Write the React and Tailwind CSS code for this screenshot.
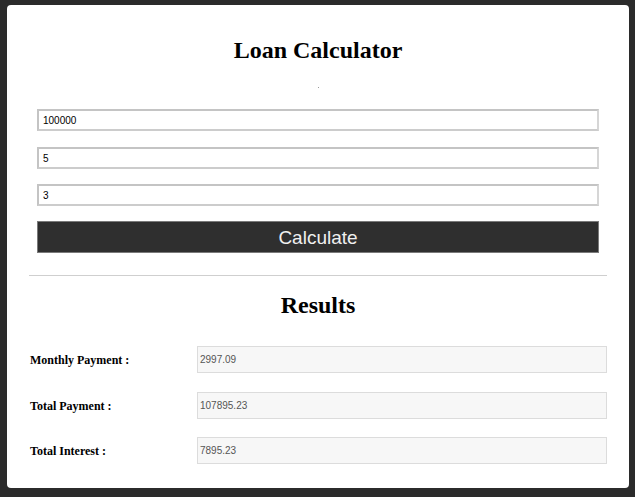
import React from "react";

export default function App() {
  const rows = [
    ["Monthly Payment :", "2997.09", "mt-[27px]"],
    ["Total Payment :", "107895.23", "mt-[19px]"],
    ["Total Interest :", "7895.23", "mt-[18px]"],
  ];
  const inputCls =
    "block w-[562px] h-[22px] border-2 border-t-[#c4c4c4] border-l-[#c4c4c4] border-r-[#d6d6d6] border-b-[#cccccc] bg-white px-[4px] text-[10px] text-black outline-none";
  return (
    <div
      className="w-[635px] h-[497px] bg-[#2b2b2b] pt-[5px] pl-[7px]"
      style={{ fontFamily: '"Liberation Sans", Arial, sans-serif' }}
    >
      <div className="w-[622px] h-[483px] bg-white rounded-[4px] pt-[31px]">
        <h1
          className="text-center text-[24px] leading-[28px] font-bold text-black"
          style={{ fontFamily: '"Liberation Serif", "Times New Roman", serif' }}
        >
          Loan Calculator
        </h1>
        <div className="mt-[23px] mx-auto w-px h-px bg-[#9a9a9a]" />
        <div className="mt-[21px] ml-[30px] w-[562px]">
          <input className={inputCls} defaultValue="100000" />
          <input className={inputCls + " mt-[16px]"} defaultValue="5" />
          <input className={inputCls + " mt-[15px]"} defaultValue="3" />
          <button className="mt-[15px] block w-[562px] h-[32px] bg-[#2f2f2f] border border-[#7a7a7a] text-[#f0f0f0] text-[19px] leading-none">
            Calculate
          </button>
        </div>
        <div className="mt-[22px] ml-[22px] w-[578px] border-t border-[#cfcfcf]" />
        <h2
          className="mt-[15px] text-center text-[24px] leading-[28px] font-bold text-black"
          style={{ fontFamily: '"Liberation Serif", "Times New Roman", serif' }}
        >
          Results
        </h2>
        {rows.map(([label, value, mt]) => (
          <div key={label} className={"flex items-center pl-[23px] " + mt}>
            <div
              className="w-[167px] text-[12px] font-bold text-black"
              style={{ fontFamily: '"Liberation Serif", "Times New Roman", serif' }}
            >
              {label}
            </div>
            <div className="w-[410px] h-[27px] bg-[#f7f7f7] border border-[#dcdcdc] flex items-center pl-[2px] text-[10px] text-[#555]">
              {value}
            </div>
          </div>
        ))}
      </div>
    </div>
  );
}
